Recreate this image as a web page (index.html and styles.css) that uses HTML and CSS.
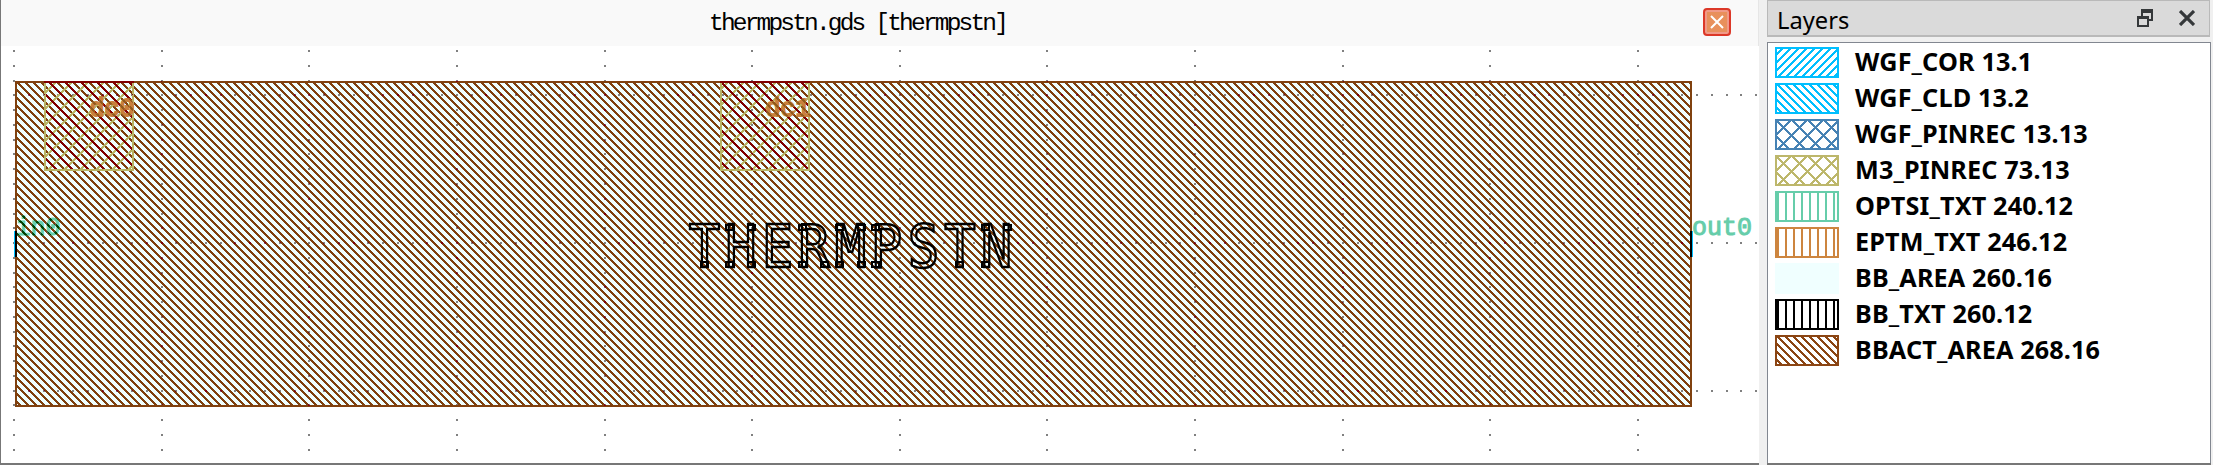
FILE: index.html
```html
<!DOCTYPE html>
<html lang="en">
<head>
<meta charset="utf-8">
<title>thermpstn.gds</title>
<link rel="stylesheet" href="styles.css">
</head>
<body>
<div class="app">
  <main class="view">
    <header class="titlebar">
      <h1 class="title">thermpstn.gds [thermpstn]</h1>
      <button class="tab-close" aria-label="Close"><svg width="14" height="14" viewBox="0 0 14 14"><path d="M1 1L13 13M13 1L1 13"/></svg></button>
    </header>
    <svg class="canvas" id="canvas" viewBox="1 46 1758 417" width="1758" height="417">
      <defs id="defs"></defs>
      <g id="dots" class="dots"></g>
      <rect class="area" x="15" y="81" width="1677" height="326"/>
      <g id="inner-dots" class="dots"></g>
      <rect fill="url(#h-brown)" x="15" y="81" width="1677" height="326"/>
      <rect class="area-line" x="16" y="82" width="1675" height="324"/>
      <g id="pins"></g>
      <g mask="url(#dotmask)"><rect fill="url(#h-red)" x="15" y="81" width="1677" height="326"/></g>
      <text class="label elec" x="89.5" y="116">dc0</text>
      <text class="label elec" x="765.5" y="116">dc1</text>
      <text class="label opt" x="15.5" y="235">in0</text>
      <text class="label opt" x="1692" y="235">out0</text>
      <g mask="url(#textmask)"><rect fill="url(#h-green)" x="15" y="210" width="48" height="28"/><rect fill="url(#h-olive)" x="88" y="94" width="46" height="24"/><rect fill="url(#h-olive)" x="764" y="94" width="46" height="24"/></g>
      <rect class="port" x="14" y="231" width="1.5" height="26"/><rect x="15" y="231" width="2" height="26"/>
      <rect class="port" x="1692" y="231" width="1" height="26"/><rect x="1690" y="231" width="2" height="26"/>
      <text class="cell" transform="scale(.9 1)" x="782.8 823.3 863.9 904.4 945 985 1026.1 1066.7 1107.2" y="267">THERMPSTN</text>
      <g id="joints" class="joints"></g>
    </svg>
  </main>
  <aside class="dock">
    <header class="dock-head">
      <h2 class="dock-title">Layers</h2>
      <svg class="dock-icon" width="16" height="18" viewBox="0 0 16 18"><path fill="#35383a" fill-rule="evenodd" d="M4 0H16V12H12V18H0V7H4ZM6 4V7H12V10H14V4ZM2 10V16H10V10Z"/></svg>
      <svg class="dock-icon" width="16" height="16" viewBox="0 0 16 16"><path stroke="#35383a" stroke-width="3.2" d="M1 1L15 15M15 1L1 15"/></svg>
    </header>
    <ul class="layers" id="layers"></ul>
  </aside>
</div>
<script src="app.js"></script>
</body>
</html>
```
FILE: styles.css
```css
* { box-sizing: border-box; }
body { margin: 0; background: #f0f0f0; overflow: hidden; }
.app { display: flex; gap: 8px; width: 2213px; height: 465px; }
.view { width: 1759px; border-left: 1px solid #777; border-bottom: 2px solid #777; background: #fff; }
.titlebar { display: flex; align-items: center; height: 46px; padding: 0 27px 2px 0; background: #f9f9f9; border-right: 1px solid #e6e6e6; }
.title { flex: 1; margin: 0; padding: 3px 0 0 708px; font: 400 24.5px/44px "Liberation Mono", monospace; letter-spacing: -2.82px; white-space: pre; color: #000; }
.tab-close { display: grid; place-items: center; width: 28px; height: 28px; padding: 0; border: 2px solid #dc3828; border-radius: 4px; background: #e8905c; box-shadow: inset 0 0 0 2px #f09a88; }
.tab-close path { stroke: #fff; stroke-width: 2; fill: none; }
.canvas { display: block; shape-rendering: crispEdges; }
.dots { fill: #808080; }
.area { fill: #f0ffff; }
.area-line { fill: none; stroke: #80410f; stroke-width: 2; }
.pin { fill: none; stroke: #b8b466; stroke-width: 2; }
.label { font: 25px "Liberation Mono", monospace; stroke-width: 1; }
.elec { fill: #c87f3c; stroke: #c87f3c; stroke-width: 1.8; }
.opt { fill: #66cdaa; stroke: #66cdaa; }
.port { fill: #00bfff; }
.cell { font: 58px "DejaVu Sans Mono", monospace; fill: none; stroke: #000; stroke-width: 2.5; text-anchor: middle; }
.joints { fill: none; stroke: #000; stroke-width: 2; }
.dock { display: flex; flex-direction: column; gap: 5px; width: 444px; border-bottom: 2px solid #777; }
.dock-head { display: flex; align-items: center; gap: 26px; height: 37px; width: 443px; padding: 0 14px 0 9px; background: #dadada; border: 1px solid #b9b9b9; border-bottom-width: 2px; }
.dock-title { flex: 1; margin: 0; font: 400 23.7px/34px "Noto Sans", sans-serif; padding-top: 4px; }
.layers { flex: 1; margin: 0; padding: 4px 7px; list-style: none; background: #fff; border: 1px solid #828790; border-bottom: 0; }
.layer { display: flex; align-items: center; gap: 16px; height: 31px; margin-bottom: 5px; font: 700 25.2px/28px "Noto Sans", sans-serif; letter-spacing: .15px; white-space: pre; color: #000; }
.layer-name { margin-top: -4px; }
.swatch { flex: none; shape-rendering: crispEdges; }
```
FILE: app.js
```js
// Stipple tiles: each row is a run of pixels shifted by one per row.
function run(x, y, size, w) {
  let d = '';
  for (let i = 0; i < w; i++) d += `M${(x + i + size * 4) % size} ${y}h1v1h-1z`;
  return d;
}
function diag(size, w, dir, off) {
  let d = '';
  for (let y = 0; y < size; y++) d += run(dir * y + off, y, size, w);
  return d;
}
function pattern(id, size, d, color) {
  return `<pattern id="${id}" patternUnits="userSpaceOnUse" width="${size}" height="${size}"><path d="${d}" fill="${color}"/></pattern>`;
}

// Grid: dots every P pixels, grid lines every tenth dot.
const P = 14.764;
function dots() {
  let out = '';
  const cols = [], rows = [];
  for (let k = -1; 13 + k * P < 1758; k++) cols.push(Math.round(13 + k * P));
  for (let k = -3; 94.4 + k * P < 464; k++) rows.push(Math.round(94.4 + k * P));
  for (let k = 0; k < 12; k++) {
    const x = Math.round(13 + k * P * 10);
    rows.forEach(y => { out += `<rect x="${x}" y="${y}" width="2" height="2"/>`; });
  }
  [94, 242, 390].forEach(y => cols.forEach(x => { out += `<rect x="${x}" y="${y}" width="2" height="2"/>`; }));
  return out;
}
const D = dots();
document.getElementById('dots').innerHTML = D;
document.getElementById('inner-dots').innerHTML = D;

const white = 'style="fill:#fff;stroke:#fff"';
document.getElementById('defs').innerHTML =
  ['brown:#80410f', 'red:#800010', 'green:#004000', 'olive:#8f5a1c'].map(s => {
    const [n, c] = s.split(':');
    return pattern('h-' + n, 8, diag(8, 3, 1, -2), c);
  }).join('') +
  pattern('p-fwd', 16, diag(16, 3, -1, 8), '#b8b466') +
  pattern('p-back', 16, diag(16, 3, 1, -2), '#800000') +
  `<mask id="dotmask"><g fill="#fff">${D}</g></mask>` +
  `<mask id="textmask"><text ${white} class="label" x="89.5" y="116">dc0</text><text ${white} class="label" x="765.5" y="116">dc1</text><text ${white} class="label" x="15.5" y="235">in0</text></mask>`;

document.getElementById('pins').innerHTML = [44, 720].map(x =>
  `<rect x="${x}" y="81" width="90" height="90" fill="url(#p-fwd)"/><rect x="${x}" y="81" width="90" height="90" fill="url(#p-back)"/><rect class="pin" x="${x + 1}" y="82" width="88" height="88"/><rect x="${x}" y="81" width="90" height="2" fill="#800000"/>`).join('');

// Polygon joints at the stroke ends of the cell name
document.getElementById('joints').innerHTML = [
  [701, 262], [726, 262], [748, 262], [726, 225], [748, 225], [799, 262], [821, 262], [799, 225],
  [836, 262], [858, 262], [836, 225], [858, 225], [872, 262], [872, 225], [956, 262], [982, 262], [982, 225], [1004, 225]
].map(([x, y]) => `<rect x="${x}" y="${y}" width="7" height="5"/>`).join('');

const layers = [
  ['WGF_COR 13.1', '#00bfff', 'fwd'], ['WGF_CLD 13.2', '#00bfff', 'back'],
  ['WGF_PINREC 13.13', '#4682b4', 'cross'], ['M3_PINREC 73.13', '#bdb76b', 'cross'],
  ['OPTSI_TXT 240.12', '#66cdaa', 'vert'], ['EPTM_TXT 246.12', '#cd853f', 'vert'],
  ['BB_AREA 260.16', '#f0ffff', 'solid'], ['BB_TXT 260.12', '#000', 'vert'],
  ['BBACT_AREA 268.16', '#8b4513', 'back']
];
const tiles = {
  fwd: [8, diag(8, 3, -1, -1)],
  back: [8, diag(8, 3, 1, 0)],
  cross: [16, diag(16, 3, 1, -1) + diag(16, 3, -1, -1)],
  vert: [8, 'M2 0h2v8h-2z'],
  solid: [8, 'M0 0h8v8h-8z']
};
document.getElementById('layers').innerHTML = layers.map(([name, c, t], i) =>
  `<li class="layer"><svg class="swatch" width="64" height="31"><defs>${pattern('s' + i, tiles[t][0], tiles[t][1], c)}</defs><rect width="64" height="31" fill="url(#s${i})"/><rect x="1" y="1" width="62" height="29" fill="none" stroke="${c}" stroke-width="2"/></svg><span class="layer-name">${name}</span></li>`).join('');
```
